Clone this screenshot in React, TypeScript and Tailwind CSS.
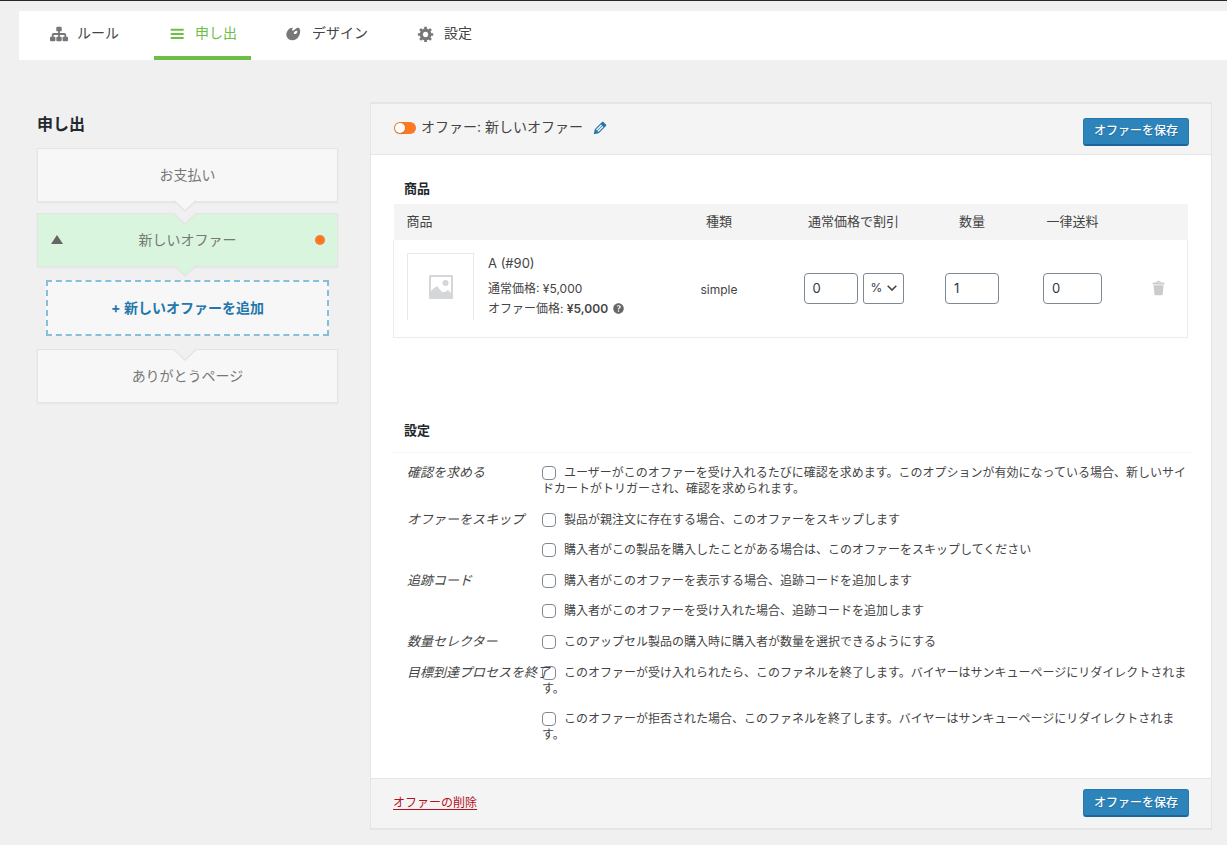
import type { ReactNode } from "react";

type IconProps = { path: string; className: string };

function Icon({ path, className }: IconProps) {
  return (
    <svg viewBox="0 0 20 20" fill="currentColor" fillRule="evenodd" aria-hidden="true" className={className}>
      <path d={path} />
    </svg>
  );
}

const NETWORK =
  "M18 13h1c.55 0 1 .45 1 1.01v2.98c0 .56-.45 1.01-1 1.01h-4c-.55 0-1-.45-1-1.01v-2.98c0-.56.45-1.01 1-1.01h1v-2h-5v2h1c.55 0 1 .45 1 1.01v2.98c0 .56-.45 1.01-1 1.01H8c-.55 0-1-.45-1-1.01v-2.98c0-.56.45-1.01 1-1.01h1v-2H4v2h1c.55 0 1 .45 1 1.01v2.98C6 17.55 5.55 18 5 18H1c-.55 0-1-.45-1-1.01v-2.98C0 13.45.45 13 1 13h1v-2c0-1.1.9-2 2-2h5V7H8c-.55 0-1-.45-1-1.01V3.01C7 2.45 7.45 2 8 2h4c.55 0 1 .45 1 1.01v2.98C13 6.55 12.55 7 12 7h-1v2h5c1.1 0 2 .9 2 2v2z";
const LINES = "M3 4.2h14.4v2.3H3zM3 8.75h14.4v2.3H3zM3 13.3h14.4v2.3H3z";
const ART =
  "M8.55 3.06c1.01.34-1.95 2.01-.1 3.13 1.04.63 3.31-2.22 4.45-2.86.97-.54 2.67-.65 3.53 1.23 1.09 2.38.14 8.57-3.79 11.06-3.97 2.5-8.97 1.23-10.7-2.66-2.01-4.53 3.12-11.09 6.61-9.9zm1.21 6.45c.73 1.64 4.7-.5 3.79-2.8-.59-1.49-4.48 1.25-3.79 2.8z";
const GEAR =
  "M18 12h-2.18c-.17.7-.44 1.35-.81 1.93l1.54 1.54-2.1 2.1-1.54-1.54c-.58.36-1.23.63-1.91.79V19H8v-2.18c-.68-.16-1.33-.43-1.91-.79l-1.54 1.54-2.12-2.12 1.54-1.54c-.36-.58-.63-1.23-.79-1.91H1V9.03h2.17c.16-.7.44-1.35.8-1.94L2.43 5.55l2.1-2.1 1.54 1.54c.58-.37 1.24-.64 1.93-.81V2h3v2.18c.68.16 1.33.43 1.91.79l1.54-1.54 2.12 2.12-1.54 1.54c.36.59.64 1.24.8 1.94H18V12zm-8.5 1.5c1.66 0 3-1.34 3-3s-1.34-3-3-3-3 1.34-3 3 1.34 3 3 3z";
const TRASH =
  "M12 4h3c.6 0 1 .4 1 1v1H3V5c0-.6.5-1 1-1h3c.2-1.1 1.3-2 2.5-2s2.3.9 2.5 2zM8 4h3c-.2-.6-.9-1-1.5-1S8.2 3.4 8 4zM4 7h11l-.9 10.1c0 .5-.5.9-1 .9H5.9c-.5 0-.9-.4-1-.9L4 7z";
const PENCIL =
  "M13.89 3.39l2.71 2.72c.46.46.42 1.24.03 1.64l-8.01 8.02-5.56 1.16 1.16-5.58s7.6-7.63 7.99-8.03c.39-.39 1.22-.39 1.68.07zm-2.73 2.79l-5.59 5.61 1.11 1.11 5.54-5.65zm-2.97 8.23l5.58-5.6-1.07-1.08-5.59 5.6z";
const HELP =
  "M17 10c0-3.87-3.14-7-7-7-3.87 0-7 3.13-7 7s3.13 7 7 7c3.86 0 7-3.13 7-7zm-6.3 1.48H9.14v-.43c0-.38.08-.7.24-.98s.46-.57.88-.89c.41-.29.68-.53.81-.71.14-.18.2-.39.2-.62 0-.25-.09-.44-.28-.58-.19-.13-.45-.19-.79-.19-.58 0-1.25.19-2 .57l-.64-1.28c.87-.49 1.8-.74 2.77-.74.81 0 1.45.2 1.92.58.48.39.71.91.71 1.55 0 .43-.09.8-.29 1.11-.19.32-.57.67-1.11 1.06-.38.28-.61.49-.71.63-.1.15-.15.34-.15.57v.35zm-1.47 2.74c-.18-.17-.27-.42-.27-.73 0-.33.08-.58.26-.75s.43-.25.77-.25c.32 0 .57.09.75.26s.27.42.27.74c0 .3-.09.55-.27.72-.18.18-.43.27-.75.27-.33 0-.58-.09-.76-.26z";

/* Triangular connector between two steps of the funnel. */
function Notch({ className }: { className: string }) {
  return (
    <svg viewBox="0 0 22 12" aria-hidden="true" className={`absolute left-[136px] h-3 w-[22px] ${className}`}>
      <path d="M0 0H22L11 11Z" />
      <path d="M0 .5 11 11 22 .5" fill="none" stroke="#e4e4e4" strokeWidth="1.3" />
    </svg>
  );
}

function SaveButton() {
  return (
    <button
      type="button"
      className="h-7 rounded-[3px] border border-b-2 border-[#2478ae] border-b-[#1c679a] bg-[#2c84bb] px-[10px] text-xs leading-6 font-medium text-white [text-shadow:0_1px_1px_#1c679a]"
    >
      オファーを保存
    </button>
  );
}

function TextBox({ label, value, className }: { label: string; value: string; className: string }) {
  return (
    <input
      type="text"
      aria-label={label}
      defaultValue={value}
      className={`h-[31px] rounded border border-[#7e8993] bg-white px-2 text-[13px] text-[#32373c] ${className}`}
    />
  );
}

function Setting({ title, children }: { title: string; children: ReactNode }) {
  return (
    <div role="group" aria-label={title} className="flex">
      <div className="relative z-10 w-[135px] shrink-0 text-[13px] leading-[14px] whitespace-nowrap italic">{title}</div>
      <div className="flex min-w-0 flex-1 flex-col gap-[14px]">{children}</div>
    </div>
  );
}

function Option({ children }: { children: ReactNode }) {
  return (
    <label className="block text-xs leading-4">
      <input
        type="checkbox"
        className="mr-2 inline-block h-[14px] w-[14px] appearance-none rounded-[4px] border border-[#7e8993] bg-white align-[-3px] checked:bg-[#2c84bb]"
      />
      {children}
    </label>
  );
}

const tabs = [
  { label: "ルール", path: NETWORK, box: "pl-[31px] pr-[35px]", active: false },
  { label: "申し出", path: LINES, box: "px-[14px]", active: true },
  { label: "デザイン", path: ART, box: "pl-[34px] pr-[25px]", active: false },
  { label: "設定", path: GEAR, box: "pl-6 pr-[14px]", active: false },
];

export default function App() {
  return (
    <div className="min-h-screen border-t border-[#23282d] bg-[#f0f0f0] pt-[10px] font-['Inter','Noto_Sans_CJK_JP',sans-serif] text-[#444]">
      <nav className="ml-[19px] flex h-[49px] bg-white text-sm">
        {tabs.map((tab) => (
          <a
            key={tab.label}
            href="#"
            aria-current={tab.active ? "page" : undefined}
            className={`flex items-center gap-[9px] border-b-4 ${tab.box} ${
              tab.active ? "border-[#6dbe45] text-[#6dbe45]" : "border-transparent"
            }`}
          >
            <Icon path={tab.path} className={`size-[18px] ${tab.active ? "" : "text-[#777]"}`} />
            <span className="pb-[2px]">{tab.label}</span>
          </a>
        ))}
      </nav>

      <div className="flex items-start gap-8 pt-[42px] pr-[15px] pb-4 pl-[37px]">
        <aside className="w-[301px] shrink-0 pt-[10px] text-sm text-[#777]">
          <h2 className="mb-3 text-base leading-6 font-bold text-[#23282d]">申し出</h2>
          <div className="relative flex h-[54px] items-center justify-center border border-[#e4e4e4] bg-[#f7f7f7] pb-px shadow-xs">
            お支払い
            <Notch className="top-[51px] fill-[#f7f7f7]" />
          </div>
          <div className="relative mt-[11px] flex h-[54px] items-center justify-center border border-[#e4e4e4] bg-[#daf5de] pb-px shadow-xs">
            <Notch className="-top-px fill-[#f0f0f0]" />
            <svg viewBox="0 0 12 9" aria-hidden="true" className="absolute left-[13px] h-[9px] w-3 fill-[#666]">
              <path d="M6 0 12 9H0Z" />
            </svg>
            新しいオファー
            <span className="absolute right-3 size-[10px] rounded-full bg-[#fc7823]" />
            <Notch className="top-[51px] fill-[#daf5de]" />
          </div>
          <button
            type="button"
            className="mx-[9px] mt-[13px] flex h-14 w-[283px] items-center justify-center border-2 border-dashed border-[#85bfdc] bg-[#f7f7f7] font-bold text-[#2477ac]"
          >
            + 新しいオファーを追加
          </button>
          <div className="relative mt-[13px] flex h-[54px] items-center justify-center border border-[#e4e4e4] bg-[#f7f7f7] pb-px shadow-xs">
            <Notch className="-top-px fill-[#f0f0f0]" />
            ありがとうページ
          </div>
        </aside>

        <main className="min-w-0 flex-1 border border-y-2 border-[#e5e5e5] bg-white">
          <header className="flex h-[51px] items-center border-b border-[#e5e5e5] bg-[#f4f4f4] pr-[22px] pl-[23px]">
            <div className="flex items-center pb-[2px]">
              <input
                type="checkbox"
                role="switch"
                aria-label="オファーを有効にする"
                className="mr-[5px] flex h-3 w-[22px] appearance-none items-center rounded-full bg-[#fc7823] px-px before:size-[10px] before:rounded-full before:bg-white before:shadow checked:justify-end"
              />
              <span className="pb-[2px] text-sm">オファー: 新しいオファー</span>
              <button type="button" aria-label="名前を編集" className="ml-2 text-[#2477ac]">
                <Icon path={PENCIL} className="size-[18px]" />
              </button>
            </div>
            <div className="ml-auto pt-[5px]">
              <SaveButton />
            </div>
          </header>

          <section className="pt-[23px] pr-[23px] pl-[22px]">
            <h3 className="mb-[6px] pl-[11px] text-[13px] leading-5 font-bold text-[#23282d]">商品</h3>
            <table className="w-full table-fixed text-center">
              <colgroup>
                <col />
                <col className="w-[117px]" />
                <col className="w-[152px]" />
                <col className="w-[85px]" />
                <col className="w-[116px]" />
                <col className="w-[57px]" />
              </colgroup>
              <thead>
                <tr className="h-9 bg-[#f4f4f4] text-[13px]">
                  <th className="pb-px pl-[13px] text-left font-normal">商品</th>
                  <th className="pb-px font-normal">種類</th>
                  <th className="pb-px font-normal">通常価格で割引</th>
                  <th className="pb-px font-normal">数量</th>
                  <th className="pb-px font-normal">一律送料</th>
                  <td />
                </tr>
              </thead>
              <tbody className="border border-t-0 border-[#ececec]">
                <tr className="h-[97px] text-xs">
                  <td className="pb-1 text-left">
                    <div className="flex gap-[14px] pl-[13px]">
                      <div className="flex size-[67px] items-center justify-center border border-b-0 border-[#e8e8e8]">
                        <svg viewBox="0 0 24 24" aria-hidden="true" className="size-6">
                          <rect width="24" height="24" rx="1" fill="#d5d6da" />
                          <path d="M2 2h20v16l-3-3-3 2-3 0-5-6-3 2-3 3Z" fill="#fff" />
                          <circle cx="16.500" cy="8" r="3" fill="#d5d6da" />
                        </svg>
                      </div>
                      <div>
                        <div className="mb-[6px] text-[13px] leading-5">A (#90)</div>
                        <div className="leading-5">通常価格: ¥5,000</div>
                        <div className="flex items-center leading-5">
                          <span>
                            オファー価格: <strong className="font-semibold">¥5,000</strong>
                          </span>
                          <Icon path={HELP} className="ml-[3px] size-[15px] text-[#666]" />
                        </div>
                      </div>
                    </div>
                  </td>
                  <td className="pt-1">simple</td>
                  <td>
                    <div className="flex justify-center gap-[5px]">
                      <TextBox label="割引" value="0" className="w-[54px]" />
                      <div className="relative flex items-center">
                        <select
                          aria-label="割引の単位"
                          className="h-[31px] w-[41px] appearance-none rounded-[3px] border border-[#7e8993] bg-white pl-[7px] text-xs text-[#32373c]"
                        >
                          <option>%</option>
                          <option>¥</option>
                        </select>
                        <svg
                          viewBox="0 0 10 6"
                          aria-hidden="true"
                          className="pointer-events-none absolute right-[7px] h-[6px] w-[10px] fill-none stroke-[#444]"
                        >
                          <path d="M.7.7 5 5 9.300.7" strokeWidth="1.600" />
                        </svg>
                      </div>
                    </div>
                  </td>
                  <td>
                    <TextBox label="数量" value="1" className="w-[54px]" />
                  </td>
                  <td>
                    <TextBox label="一律送料" value="0" className="w-[59px]" />
                  </td>
                  <td>
                    <button type="button" aria-label="商品を削除" className="align-middle text-[#cfcaca]">
                      <Icon path={TRASH} className="size-[18px]" />
                    </button>
                  </td>
                </tr>
              </tbody>
            </table>
          </section>

          <section className="pt-[82px] pr-[19px] pb-[35px] pl-[22px]">
            <h3 className="pb-3 pl-[11px] text-[13px] leading-5 font-bold text-[#23282d]">設定</h3>
            <div className="flex flex-col gap-[15px] border-t border-[#f5f5f5] pt-3 pl-[14px]">
              <Setting title="確認を求める">
                <Option>
                  ユーザーがこのオファーを受け入れるたびに確認を求めます。このオプションが有効になっている場合、新しいサイドカートがトリガーされ、確認を求められます。
                </Option>
              </Setting>
              <Setting title="オファーをスキップ">
                <Option>製品が親注文に存在する場合、このオファーをスキップします</Option>
                <Option>購入者がこの製品を購入したことがある場合は、このオファーをスキップしてください</Option>
              </Setting>
              <Setting title="追跡コード">
                <Option>購入者がこのオファーを表示する場合、追跡コードを追加します</Option>
                <Option>購入者がこのオファーを受け入れた場合、追跡コードを追加します</Option>
              </Setting>
              <Setting title="数量セレクター">
                <Option>このアップセル製品の購入時に購入者が数量を選択できるようにする</Option>
              </Setting>
              <Setting title="目標到達プロセスを終了">
                <Option>
                  このオファーが受け入れられたら、このファネルを終了します。バイヤーはサンキューページにリダイレクトされます。
                </Option>
                <Option>
                  このオファーが拒否された場合、このファネルを終了します。バイヤーはサンキューページにリダイレクトされます。
                </Option>
              </Setting>
            </div>
          </section>

          <footer className="flex h-[50px] items-center justify-between border-t border-[#e5e5e5] bg-[#f4f4f4] pr-[22px] pl-[22px]">
            <a href="#" className="text-xs text-[#b5121b] underline underline-offset-2">
              オファーの削除
            </a>
            <SaveButton />
          </footer>
        </main>
      </div>
    </div>
  );
}
